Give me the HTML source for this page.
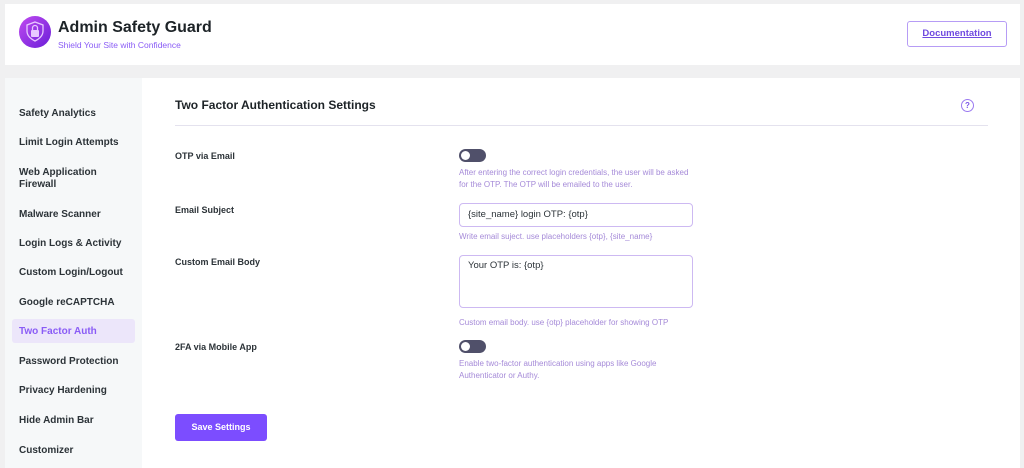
<!DOCTYPE html>
<html><head><meta charset="utf-8"><style>
*{margin:0;padding:0;box-sizing:border-box}
body{width:1024px;height:464px;background:#f0f0f1;font-family:"Liberation Sans","DejaVu Sans",sans-serif;position:relative;overflow:hidden;color:#1d2327}
.abs{position:absolute}
.hdr{left:5px;top:4px;width:1015px;height:61px;background:#fff}
.main{left:5px;top:78px;width:1015px;height:390px;background:#fff}
.side{left:5px;top:78px;width:137px;height:390px;background:#f6f8f9}
.nav{position:absolute;left:19px;font-size:10px;color:#2c3338;font-weight:600;line-height:12px}
.lbl{position:absolute;left:175px;font-size:9px;font-weight:600;color:#2c3338}
.desc{position:absolute;left:459px;font-size:8px;color:#a58ad8;line-height:11.5px}
.tog{position:absolute;left:459px;width:27px;height:13px;border-radius:7px;background:#50506a}
.tog:after{content:"";position:absolute;left:2px;top:2px;width:9px;height:9px;border-radius:50%;background:#fff}
.inp{position:absolute;left:459px;width:234px;border:1px solid #cdb9f2;border-radius:4px;font-size:9.5px;color:#2c3338;padding:7px 8px;background:#fff}
</style></head><body>
<div class="abs hdr"></div>
<svg class="abs" style="left:19px;top:16px" width="32" height="32" viewBox="0 0 32 32"><defs><linearGradient id="g" x1="0" y1="0" x2="1" y2="1"><stop offset="0" stop-color="#c04bf0"/><stop offset="1" stop-color="#6a1ed8"/></linearGradient></defs><circle cx="16" cy="16" r="16" fill="url(#g)"/><path d="M16 6l8 3v6c0 5-4 8-8 10-4-2-8-5-8-10V9z" fill="none" stroke="#e8c8ff" stroke-width="1.3"/><rect x="12" y="14" width="8" height="7" rx="1" fill="#e8c8ff"/><path d="M13.5 14v-2a2.5 2.5 0 015 0v2" fill="none" stroke="#e8c8ff" stroke-width="1.3"/></svg>
<div class="abs" style="left:58px;top:19px;font-size:16px;font-weight:600;color:#1d2327">Admin Safety Guard</div>
<div class="abs" style="left:58px;top:40px;font-size:8.5px;color:#8a5cf6">Shield Your Site with Confidence</div>
<div class="abs" style="left:907px;top:21px;width:100px;height:26px;border:1px solid #b69cf5;border-radius:3px;font-size:9.5px;color:#6f4ae0;text-decoration:underline;text-align:center;line-height:24px;font-weight:600">Documentation</div>
<div class="abs main"></div>
<div class="abs side"></div>
<div class="abs" style="left:12px;top:319px;width:123px;height:24px;background:#ece6fa;border-radius:3px"></div>
<div class="nav" style="top:108px">Safety Analytics</div>
<div class="nav" style="top:137px">Limit Login Attempts</div>
<div class="nav" style="top:167px">Web Application<br>Firewall</div>
<div class="nav" style="top:209px">Malware Scanner</div>
<div class="nav" style="top:238px">Login Logs &amp; Activity</div>
<div class="nav" style="top:267px">Custom Login/Logout</div>
<div class="nav" style="top:297px">Google reCAPTCHA</div>
<div class="nav" style="top:326px;color:#8a5cf6">Two Factor Auth</div>
<div class="nav" style="top:356px">Password Protection</div>
<div class="nav" style="top:385px">Privacy Hardening</div>
<div class="nav" style="top:415px">Hide Admin Bar</div>
<div class="nav" style="top:445px">Customizer</div>
<div class="abs" style="left:175px;top:98px;font-size:12px;font-weight:600">Two Factor Authentication Settings</div>
<div class="abs" style="left:961px;top:99px;width:13px;height:13px;border:1.2px solid #9b7af0;border-radius:50%;font-size:8px;color:#7a55e8;text-align:center;line-height:11px;font-weight:600">?</div>
<div class="abs" style="left:175px;top:125px;width:813px;height:1px;background:#e4e2ee"></div>
<div class="lbl" style="top:151px">OTP via Email</div>
<div class="tog" style="top:149px"></div>
<div class="desc" style="top:167px">After entering the correct login credentials, the user will be asked<br>for the OTP. The OTP will be emailed to the user.</div>
<div class="lbl" style="top:205px">Email Subject</div>
<div class="inp" style="top:203px;height:24px;padding-top:5px">{site_name} login OTP: {otp}</div>
<div class="desc" style="top:231px">Write email suject. use placeholders {otp}, {site_name}</div>
<div class="lbl" style="top:257px">Custom Email Body</div>
<div class="inp" style="top:255px;height:53px;padding-top:4px">Your OTP is: {otp}</div>
<div class="desc" style="top:317px">Custom email body. use {otp} placeholder for showing OTP</div>
<div class="lbl" style="top:342px">2FA via Mobile App</div>
<div class="tog" style="top:340px"></div>
<div class="desc" style="top:358px">Enable two-factor authentication using apps like Google<br>Authenticator or Authy.</div>
<div class="abs" style="left:175px;top:414px;width:92px;height:27px;background:#7c4dff;border-radius:3px;color:#fff;font-size:9px;font-weight:600;text-align:center;line-height:27px">Save Settings</div>
</body></html>
